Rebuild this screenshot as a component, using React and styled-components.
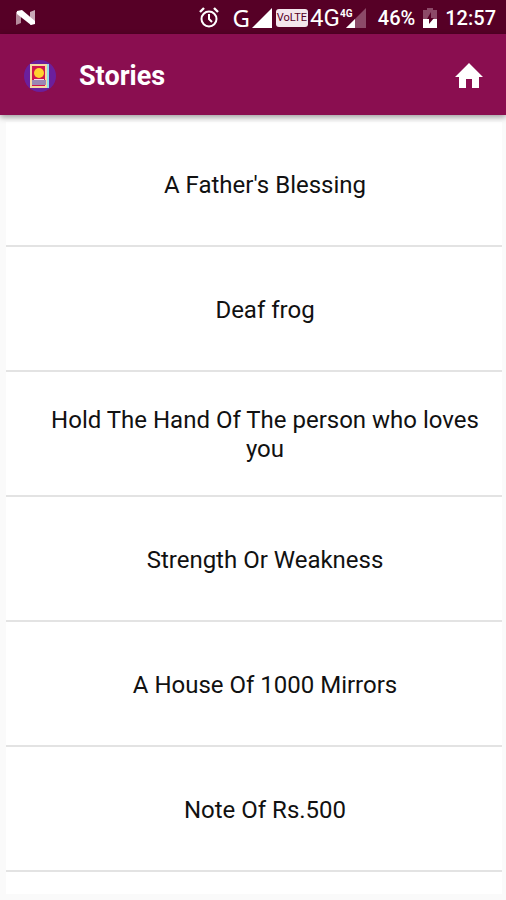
import React from "react";
import styled, { createGlobalStyle } from "styled-components";

const GlobalStyle = createGlobalStyle`
  * {
    box-sizing: border-box;
  }
  body {
    margin: 0;
    background: #fafafa;
    font-family: Roboto, "Noto Sans", sans-serif;
  }
`;

const Screen = styled.div`
  display: flex;
  flex-direction: column;
  height: 100vh;
  overflow: hidden;
`;

const StatusBar = styled.div`
  display: flex;
  flex: none;
  align-items: center;
  height: 34px;
  padding: 1px 10px 0 15px;
  background: #560026;
  color: #fff;

  svg {
    display: block;
    flex: none;
  }
`;

const StatusIcons = styled.div`
  display: flex;
  align-items: center;
  gap: ${(props) => props.$gap}px;
  margin-left: ${(props) => props.$space};
`;

const StatusText = styled.span`
  font-size: 20px;
  font-weight: 500;
  line-height: 32px;
`;

const NetworkText = styled.span`
  font-family: "Noto Sans", sans-serif;
  font-size: 24px;
  line-height: 32px;
`;

const MobileText = styled.span`
  font-size: 24px;
  line-height: 32px;
`;

const VolteBadge = styled.span`
  width: 32px;
  height: 18px;
  margin-right: 2px;
  border-radius: 3px;
  background: #f3e6ec;
  color: #560026;
  font-size: 11px;
  line-height: 18px;
  text-align: center;
`;

const AppBar = styled.header`
  display: flex;
  flex: none;
  align-items: center;
  height: 81px;
  padding: 2px 23px 0;
  background: #8a0e50;
  color: #fff;
  box-shadow: 0 2px 6px rgba(0, 0, 0, 0.4);
  z-index: 1;
`;

const Title = styled.h1`
  flex: 1;
  margin: 0 0 0 22px;
  font-size: 27px;
  font-weight: 700;
  line-height: 32px;
`;

const HomeButton = styled.button`
  display: flex;
  padding: 0;
  border: 0;
  background: none;
  color: inherit;
  cursor: pointer;
`;

const StoryList = styled.ul`
  flex: 1;
  min-height: 0;
  margin: 7px 4px 6px 6px;
  padding: 0;
  overflow: hidden;
  background: #fff;
  list-style: none;
`;

const StoryRow = styled.li`
  border-bottom: 2px solid #e3e3e3;
`;

const StoryLink = styled.a`
  display: flex;
  align-items: center;
  justify-content: center;
  min-height: 123px;
  padding: 3px 22px 0 44px;
  color: #111;
  font-size: 24px;
  line-height: 29px;
  text-align: center;
  text-decoration: none;
`;

const stories = [
  "A Father's Blessing",
  "Deaf frog",
  "Hold The Hand Of The person who loves you",
  "Strength Or Weakness",
  "A House Of 1000 Mirrors",
  "Note Of Rs.500",
];

function NougatIcon() {
  return (
    <svg width="22" height="18" viewBox="0 0 22 18">
      <path d="M1 3l5-1v12l-5 2z" fill="#b58a9c" />
      <path d="M15 3l5-2v13l-5 2z" fill="#c9a9b7" />
      <path d="M2 2l5-1 13 11v3l-4 1L2 5z" fill="#fff" />
    </svg>
  );
}

function AlarmIcon() {
  return (
    <svg width="20" height="21" viewBox="0 0 20 21" fill="none" stroke="#fff">
      <circle cx="10" cy="12" r="7.5" strokeWidth="2" />
      <path d="M1 5l4-4M19 5l-4-4" strokeWidth="2.4" />
      <path d="M10 7v5l3 3" strokeWidth="2" />
    </svg>
  );
}

function SignalIcon() {
  return (
    <svg width="20" height="20" viewBox="0 0 20 20">
      <path d="M0 20L20 0v20z" fill="#fff" />
    </svg>
  );
}

function WeakSignalIcon() {
  return (
    <svg width="26" height="22" viewBox="0 0 26 22">
      <path d="M6 21L26 1v20z" fill="#8c4a68" />
      <path d="M6 21l9-9v9z" fill="#fff" />
      <path d="M0 0h14v11H0z" fill="#560026" />
      <text x="0" y="10" fill="#fff" fontSize="10" fontWeight="700">
        4G
      </text>
    </svg>
  );
}

function BatteryIcon() {
  return (
    <svg width="14" height="20" viewBox="0 0 14 20">
      <path d="M4 0h6v2h4v9H0V2h4z" fill="#8c4a68" />
      <path d="M0 11h14v9H0z" fill="#fff" />
      <path d="M8 4v6h3l-5 6v-5H4z" fill="#560026" />
    </svg>
  );
}

function StoriesLogo() {
  return (
    <svg width="34" height="34" viewBox="0 0 34 34">
      <circle cx="17" cy="17" r="16" fill="#6b1f9c" />
      <path d="M7 5h19v24H7z" fill="#f6d9a0" />
      <path d="M24 5h2v24h-2z" fill="#8fdcec" />
      <path d="M9 7h13v20H9z" fill="#d0144f" />
      <circle cx="16" cy="14" r="5" fill="#ffd22e" />
      <path d="M9 21h14v5H9z" fill="#9b86b4" />
      <path d="M11 20h10v1H11z" fill="#f3dbe6" />
    </svg>
  );
}

function HomeIcon() {
  return (
    <svg width="28" height="26" viewBox="0 0 28 26">
      <path
        d="M14 0L0 14h4v11h7v-9h6v9h7V14h4z"
        fill="currentColor"
      />
    </svg>
  );
}

function App() {
  return (
    <Screen>
      <GlobalStyle />
      <StatusBar>
        <NougatIcon />
        <StatusIcons $gap={3} $space="auto">
          <AlarmIcon />
          <StatusIcons $gap={2} $space="10px">
            <NetworkText>G</NetworkText>
            <SignalIcon />
          </StatusIcons>
        </StatusIcons>
        <StatusIcons $gap={0} $space="4px">
          <VolteBadge>VoLTE</VolteBadge>
          <MobileText>4G</MobileText>
          <WeakSignalIcon />
        </StatusIcons>
        <StatusIcons $gap={8} $space="12px">
          <StatusText>46%</StatusText>
          <BatteryIcon />
          <StatusText>12:57</StatusText>
        </StatusIcons>
      </StatusBar>
      <AppBar>
        <StoriesLogo />
        <Title>Stories</Title>
        <HomeButton aria-label="Home">
          <HomeIcon />
        </HomeButton>
      </AppBar>
      <StoryList>
        {stories.map((story) => (
          <StoryRow key={story}>
            <StoryLink href="#">{story}</StoryLink>
          </StoryRow>
        ))}
      </StoryList>
    </Screen>
  );
}

export default App;
